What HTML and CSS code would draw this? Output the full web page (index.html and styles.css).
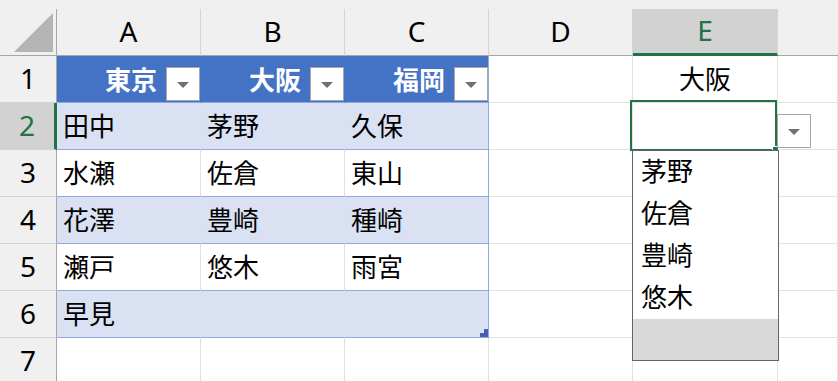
FILE: index.html
```html
<!DOCTYPE html>
<html>
<head>
    <title>Sheet</title>
    <link rel="stylesheet" href="styles.css">
</head>
<body>
<div class="sheet">
    <!-- column headers -->
    <div class="cell corner">
        <svg width="40" height="40" viewBox="0 0 40 40"><polygon points="39,0 39,39 0,39" fill="#b4b4b4"/></svg>
    </div>
    <div class="cell colhead">A</div>
    <div class="cell colhead">B</div>
    <div class="cell colhead">C</div>
    <div class="cell colhead">D</div>
    <div class="cell colhead sel-col">E</div>
    <div class="cell colhead last"></div>

    <!-- row 1 -->
    <div class="cell rowhead">1</div>
    <div class="cell th">東京<span class="filter"><i class="tri"></i></span></div>
    <div class="cell th">大阪<span class="filter"><i class="tri"></i></span></div>
    <div class="cell th end">福岡<span class="filter"><i class="tri"></i></span></div>
    <div class="cell"></div>
    <div class="cell center">大阪</div>
    <div class="cell"></div>

    <!-- row 2 -->
    <div class="cell rowhead sel-row">2</div>
    <div class="cell band">田中</div>
    <div class="cell band">茅野</div>
    <div class="cell band end">久保</div>
    <div class="cell"></div>
    <div class="cell active">
        <div class="sel-box"></div>
        <div class="handle"></div>
        <span class="drop-btn"><i class="tri"></i></span>
        <div class="drop-list">
            <div class="opt">茅野</div>
            <div class="opt">佐倉</div>
            <div class="opt">豊崎</div>
            <div class="opt">悠木</div>
            <div class="opt-rest"></div>
        </div>
    </div>
    <div class="cell"></div>

    <!-- row 3 -->
    <div class="cell rowhead">3</div>
    <div class="cell tw">水瀬</div>
    <div class="cell tw">佐倉</div>
    <div class="cell tw end">東山</div>
    <div class="cell"></div>
    <div class="cell"></div>
    <div class="cell"></div>

    <!-- row 4 -->
    <div class="cell rowhead">4</div>
    <div class="cell band">花澤</div>
    <div class="cell band">豊崎</div>
    <div class="cell band end">種崎</div>
    <div class="cell"></div>
    <div class="cell"></div>
    <div class="cell"></div>

    <!-- row 5 -->
    <div class="cell rowhead">5</div>
    <div class="cell tw">瀬戸</div>
    <div class="cell tw">悠木</div>
    <div class="cell tw end">雨宮</div>
    <div class="cell"></div>
    <div class="cell"></div>
    <div class="cell"></div>

    <!-- row 6 -->
    <div class="cell rowhead">6</div>
    <div class="cell band">早見</div>
    <div class="cell band"></div>
    <div class="cell band end resize">
        <svg class="resize-mark" width="8" height="8" viewBox="0 0 8 8"><polygon points="4,0 8,0 8,8 0,8 0,4 4,4" fill="#4b5cb3"/></svg>
    </div>
    <div class="cell"></div>
    <div class="cell"></div>
    <div class="cell"></div>

    <!-- row 7 -->
    <div class="cell rowhead">7</div>
    <div class="cell"></div>
    <div class="cell"></div>
    <div class="cell"></div>
    <div class="cell"></div>
    <div class="cell"></div>
    <div class="cell"></div>
</div>
</body>
</html>
```

FILE: styles.css
```css
body {
    margin: 0;
    background-color: #f0f0f0;
    font-family: "Noto Sans CJK JP", sans-serif;
    overflow: hidden;
}
.sheet {
    display: grid;
    grid-template-columns: 57px 144px 144px 144px 144px 145px 1fr;
    grid-auto-rows: 47px;
    padding-top: 9px;
    width: 838px;
}
.cell {
    box-sizing: border-box;
    background-color: #fff;
    border-right: 1px solid #e1e1e1;
    border-bottom: 1px solid #e1e1e1;
    display: flex;
    align-items: center;
    padding-left: 6px;
    padding-bottom: 3px;
    font-size: 26px;
    color: #000;
    white-space: nowrap;
}
.corner {
    background-color: #f0f0f0;
    border-right: 1px solid #a6a6a6;
    border-bottom: 1px solid #a6a6a6;
    padding: 4px 0 0 14px;
    align-items: flex-start;
}
.colhead {
    background-color: #f0f0f0;
    border-right: 1px solid #d4d4d4;
    border-bottom: 1px solid #a6a6a6;
    justify-content: center;
    padding: 0 0 2px 0;
    font-family: "Noto Sans", sans-serif;
    font-size: 28px;
}
.colhead.last {
    border-right: none;
}
.rowhead {
    background-color: #f0f0f0;
    border-right: 1px solid #a6a6a6;
    border-bottom: 1px solid #d4d4d4;
    justify-content: center;
    padding: 0 0 3px 0;
    font-family: "Noto Sans", sans-serif;
    font-size: 28px;
}
.sel-col {
    background-color: #d2d2d2;
    color: #217346;
    border-bottom: 3px solid #217346;
}
.sel-row {
    background-color: #d2d2d2;
    color: #217346;
    border-right: 3px solid #217346;
}
.center {
    justify-content: center;
    padding-left: 0;
}

/* table */
.th {
    background-color: #4472c4;
    border-right-color: #4472c4;
    border-bottom-color: #8ea9db;
    color: #fff;
    font-weight: bold;
    justify-content: flex-end;
    gap: 9px;
    padding: 0 0 2px 0;
}
.filter, .drop-btn {
    box-sizing: border-box;
    width: 34px;
    height: 34px;
    background-color: #fff;
    border: 1px solid #a6a6a6;
    display: flex;
    align-items: center;
    justify-content: center;
}
.filter {
    align-self: flex-end;
    margin-bottom: -1px;
}
.tri {
    width: 0;
    height: 0;
    border-left: 6px solid transparent;
    border-right: 6px solid transparent;
    border-top: 6px solid #707070;
    margin-top: 2px;
}
.band {
    background-color: #d9e1f2;
    border-right-color: #d9e1f2;
    border-bottom-color: #8ea9db;
}
.tw {
    border-bottom-color: #8ea9db;
}
.end {
    border-right-color: #8ea9db;
}
.resize {
    position: relative;
}
.resize-mark {
    position: absolute;
    right: 0;
    bottom: 0;
}

/* active cell with list */
.active {
    position: relative;
    z-index: 5;
}
.sel-box {
    position: absolute;
    left: -3px;
    top: -3px;
    width: 147px;
    height: 51px;
    box-sizing: border-box;
    border: 2px solid #217346;
}
.handle {
    position: absolute;
    left: 139px;
    top: 43px;
    width: 5px;
    height: 5px;
    background-color: #217346;
    border: 1px solid #fff;
}
.drop-btn {
    position: absolute;
    left: 144px;
    top: 11px;
}
.drop-list {
    position: absolute;
    left: -1px;
    top: 47px;
    width: 147px;
    height: 211px;
    box-sizing: border-box;
    border: 1px solid #646464;
    background-color: #fff;
    display: flex;
    flex-direction: column;
}
.opt {
    height: 42px;
    display: flex;
    align-items: center;
    padding-left: 8px;
    padding-bottom: 5px;
    box-sizing: border-box;
}
.opt-rest {
    flex: 1;
    background-color: #d9d9d9;
}
```
